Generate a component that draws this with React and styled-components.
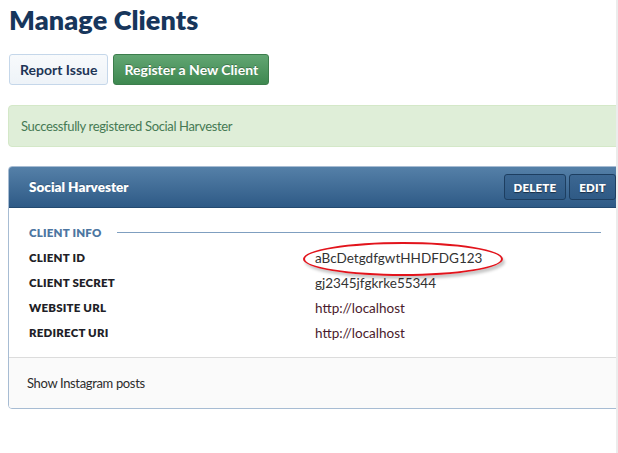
import React from "react";
import styled, { createGlobalStyle } from "styled-components";

const Global = createGlobalStyle`
  html, body { margin: 0; padding: 0; background: #fff; }
  body { font-family: "Lato", "Open Sans", Arial, sans-serif; color: #333; }
`;

const Page = styled.div`
  display: flex;
  width: 618px;
  height: 453px;
  overflow: hidden;
`;

const Main = styled.div`
  width: 616px;
  flex: none;
  overflow: hidden;
  padding-left: 8px;
  box-sizing: border-box;
`;

const Strip = styled.div`
  width: 2px;
  flex: none;
  background: #ececec;
`;

const Title = styled.h1`
  margin: 4px 0 0 1px;
  font-size: 27px;
  line-height: 32px;
  font-weight: 800;
  color: #17365c;
  letter-spacing: 0.1px;
`;

const Toolbar = styled.div`
  display: flex;
  gap: 5px;
  margin-top: 18px;
  margin-left: 1px;
`;

const Button = styled.button`
  height: 31px;
  padding: 0 10px;
  border-radius: 3px;
  font-family: inherit;
  font-size: 14px;
  font-weight: 700;
  cursor: pointer;
  border: 1px solid ${(p) => (p.$primary ? "#3c7d4c" : "#c5d7ea")};
  color: ${(p) => (p.$primary ? "#fff" : "#1e3556")};
  background: ${(p) =>
    p.$primary
      ? "linear-gradient(#62a673, #3e8850)"
      : "linear-gradient(#f8fafc, #eef3f8)"};
  text-shadow: ${(p) => (p.$primary ? "0 -1px 0 rgba(0,0,0,0.25)" : "none")};
`;

const Alert = styled.div`
  margin-top: 20px;
  width: 640px;
  height: 42px;
  box-sizing: border-box;
  display: flex;
  align-items: center;
  padding-left: 12px;
  background: #dfeed8;
  border: 1px solid #d4e8c8;
  border-radius: 4px;
  color: #467a54;
  font-size: 13px;
  letter-spacing: -0.35px;
`;

const Panel = styled.div`
  margin-top: 19px;
  width: 640px;
  border: 1px solid #a7bcd3;
  border-radius: 4px;
  overflow: hidden;
`;

const PanelHeader = styled.div`
  height: 41px;
  box-sizing: border-box;
  display: flex;
  align-items: center;
  padding-left: 20px;
  background: linear-gradient(#5580a8, #2e5a86);
  border-bottom: 1px solid #234a70;
`;

const PanelTitle = styled.div`
  flex: 1;
  color: #fff;
  font-weight: 800;
  font-size: 13.5px;
  text-shadow: 0 -1px 0 rgba(0, 0, 0, 0.2);
`;

const HeaderActions = styled.div`
  display: flex;
  gap: 3px;
  margin-right: 33px;
`;

const HeaderButton = styled.button`
  height: 26px;
  padding: 0 9px;
  border: 1px solid #1d3e60;
  border-radius: 3px;
  background: linear-gradient(#3c6792, #2f5a85);
  color: #fff;
  font-family: inherit;
  font-weight: 800;
  font-size: 11.5px;
  letter-spacing: 0.2px;
  text-shadow: 0 1px 1px rgba(0, 0, 0, 0.5);
`;

const PanelBody = styled.div`
  padding: 12px 0 12px 20px;
  position: relative;
`;

const Section = styled.div`
  display: flex;
  align-items: center;
  gap: 15px;
  width: 572px;
  height: 25px;
`;

const SectionLabel = styled.div`
  color: #4d76a1;
  font-weight: 800;
  font-size: 11.5px;
  letter-spacing: 0.2px;
`;

const SectionLine = styled.div`
  flex: 1;
  height: 1px;
  background: #7f9fc0;
`;

const Row = styled.div`
  display: grid;
  grid-template-columns: 286px 1fr;
  align-items: center;
  height: 25px;
`;

const Label = styled.div`
  color: #1f1f28;
  font-weight: 800;
  font-size: 11.5px;
  letter-spacing: 0.2px;
`;

const Value = styled.div`
  color: ${(p) => (p.$link ? "#4a1a2c" : "#333")};
  font-size: 13.5px;
`;

const Circle = styled.div`
  position: absolute;
  left: 294px;
  top: 34px;
  width: 196px;
  height: 30px;
  border: 2px solid #e2141c;
  border-radius: 50%;
  box-shadow: 2px 3px 3px rgba(0, 0, 0, 0.22);
  pointer-events: none;
`;

const Footer = styled.div`
  height: 51px;
  box-sizing: border-box;
  display: flex;
  align-items: center;
  padding-left: 18px;
  border-top: 1px solid #dcdcdc;
  background: #fafafa;
  color: #2c2c2c;
  font-size: 13px;
  letter-spacing: -0.35px;
`;

const rows = [
  { label: "CLIENT ID", value: "aBcDetgdfgwtHHDFDG123" },
  { label: "CLIENT SECRET", value: "gj2345jfgkrke55344" },
  { label: "WEBSITE URL", value: "http://localhost", link: true },
  { label: "REDIRECT URI", value: "http://localhost", link: true },
];

export default function App() {
  return (
    <>
      <Global />
      <Page>
        <Main>
          <Title>Manage Clients</Title>
          <Toolbar>
            <Button>Report Issue</Button>
            <Button $primary>Register a New Client</Button>
          </Toolbar>
          <Alert>Successfully registered Social Harvester</Alert>
          <Panel>
            <PanelHeader>
              <PanelTitle>Social Harvester</PanelTitle>
              <HeaderActions>
                <HeaderButton>DELETE</HeaderButton>
                <HeaderButton>EDIT</HeaderButton>
              </HeaderActions>
            </PanelHeader>
            <PanelBody>
              <Section>
                <SectionLabel>CLIENT INFO</SectionLabel>
                <SectionLine />
              </Section>
              {rows.map((r) => (
                <Row key={r.label}>
                  <Label>{r.label}</Label>
                  <Value $link={r.link}>{r.value}</Value>
                </Row>
              ))}
              <Circle />
            </PanelBody>
            <Footer>Show Instagram posts</Footer>
          </Panel>
        </Main>
        <Strip />
      </Page>
    </>
  );
}
